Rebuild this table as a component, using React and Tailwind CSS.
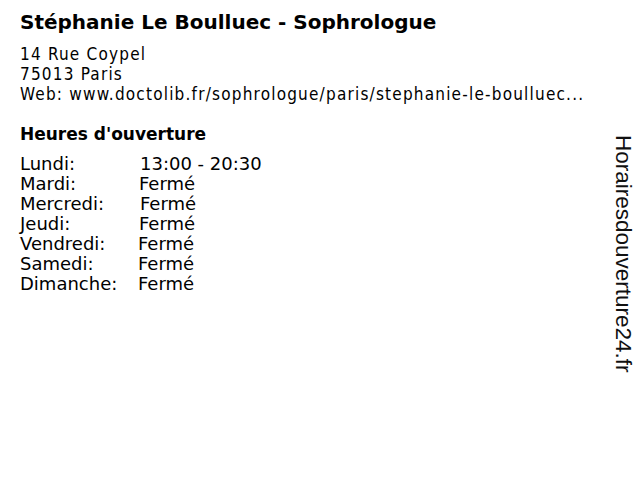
export default function App() {
    const hours = [
        { day: "Lundi:", time: "13:00 - 20:30", pad: "pl-[120px]" },
        { day: "Mardi:", time: "Fermé", pad: "pl-[119px]" },
        { day: "Mercredi:", time: "Fermé", pad: "pl-[120px]" },
        { day: "Jeudi:", time: "Fermé", pad: "pl-[119px]" },
        { day: "Vendredi:", time: "Fermé", pad: "pl-[118px]" },
        { day: "Samedi:", time: "Fermé", pad: "pl-[118px]" },
        { day: "Dimanche:", time: "Fermé", pad: "pl-[118px]" },
    ];

    return (
        <div className="relative w-[640px] h-[480px] bg-white text-black overflow-hidden">
            <div className="pl-5 pt-[8px]">
                <h1 className="font-['DejaVu_Sans',sans-serif] font-bold text-[20px] leading-[28px]">Stéphanie Le Boulluec - Sophrologue</h1>
                <div className="mt-[8px] font-['DejaVu_Sans_Condensed','DejaVu_Sans',sans-serif] text-[17px] tracking-[1.2px] leading-[20px]">
                    <div>14 Rue Coypel</div>
                    <div>75013 Paris</div>
                    <div>Web: www.doctolib.fr/sophrologue/paris/stephanie-le-boulluec...</div>
                </div>
                <h2 className="mt-[19px] font-['DejaVu_Sans',sans-serif] font-bold text-[17px] leading-[22px]">Heures d'ouverture</h2>
                <div className="mt-[9px] font-['DejaVu_Sans',sans-serif] text-[18px] leading-[20px]">
                    {hours.map((h, key) => (
                        <div key={key} className="relative h-[20px]">
                            <span className="absolute left-0 top-0">{h.day}</span>
                            <span className={`absolute top-0 left-0 ${h.pad}`}>{h.time}</span>
                        </div>
                    ))}
                </div>
            </div>
            <div className="absolute left-[611px] top-[135px] [writing-mode:vertical-rl] whitespace-nowrap font-['Liberation_Sans',sans-serif] text-[22.5px] leading-[24px] text-[#111]">
                Horairesdouverture24.fr
            </div>
        </div>
    );
}
